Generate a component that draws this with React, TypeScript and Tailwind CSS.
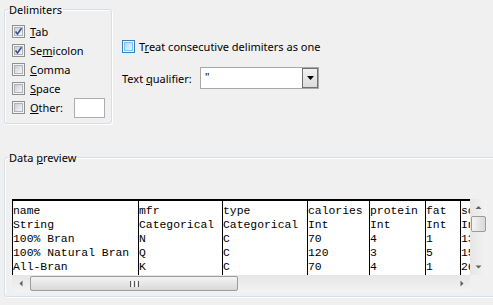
import React from "react";

const ui = { fontFamily: '"Noto Sans", Lato, sans-serif' };
const mono = { fontFamily: '"Liberation Mono", "Courier New", monospace' };

function Check({ checked, hot }: { checked?: boolean; hot?: boolean }) {
  if (hot) {
    return (
      <div className="w-[13px] h-[13px] border border-[#3c7fb1] bg-[#e9f6fd] p-[1px] shrink-0">
        <div className="w-full h-full border border-[#79c6f9] bg-gradient-to-br from-[#b1dffa] to-[#e1f4fe]" />
      </div>
    );
  }
  return (
    <div className="relative w-[13px] h-[13px] border border-[#8e8f8f] bg-[#f4f4f4] p-[1px] shrink-0">
      <div className="w-full h-full border border-[#aeb3b9] bg-gradient-to-br from-[#cbcfd5] to-[#f6f6f6]" />
      {checked && (
        <svg className="absolute left-[1px] top-[1px]" width="9" height="9" viewBox="0 0 9 9">
          <path d="M1.5 4.5 L3.5 7 L7.5 1.2" fill="none" stroke="#3a4f97" strokeWidth="1.6" />
        </svg>
      )}
    </div>
  );
}

function Row({ ul, pre = "", post, checked }: { ul: string; pre?: string; post: string; checked?: boolean }) {
  return (
    <div className="flex items-center h-[19px]">
      <Check checked={checked} />
      <span className="ml-[5px] text-[11px] leading-[15px] text-black whitespace-nowrap">
        {pre}
        <u>{ul}</u>
        {post}
      </span>
    </div>
  );
}

const cols: { w: number; cells: string[] }[] = [
  { w: 126, cells: ["name", "String", "100% Bran", "100% Natural Bran", "All-Bran"] },
  { w: 84, cells: ["mfr", "Categorical", "N", "Q", "K"] },
  { w: 85, cells: ["type", "Categorical", "C", "C", "C"] },
  { w: 62, cells: ["calories", "Int", "70", "120", "70"] },
  { w: 56, cells: ["protein", "Int", "4", "3", "4"] },
  { w: 35, cells: ["fat", "Int", "1", "5", "1"] },
  { w: 40, cells: ["sodium", "Int", "130", "15", "260"] },
];

function Tri({ dir }: { dir: "up" | "down" | "left" | "right" }) {
  const d =
    dir === "up"
      ? "M0.5 4 L3.5 1 L6.5 4 Z"
      : dir === "down"
      ? "M0.5 1.5 L3.5 4.5 L6.5 1.5 Z"
      : dir === "left"
      ? "M4.5 0.5 L1.5 3.5 L4.5 6.5 Z"
      : "M1.5 0.5 L4.5 3.5 L1.5 6.5 Z";
  const horiz = dir === "up" || dir === "down";
  return (
    <svg width={horiz ? 7 : 6} height={horiz ? 6 : 7} viewBox={horiz ? "0 0 7 6" : "0 0 6 7"}>
      <path d={d} fill="#606060" />
    </svg>
  );
}

export default function App() {
  return (
    <div className="w-[493px] h-[305px] bg-[#f0f0f0] overflow-hidden text-black" style={ui}>
      <div className="flex items-start">
        <fieldset className="ml-[4px] mt-[2px] w-[108px] h-[122px] border border-[#d5dfe5] rounded-[3px] shadow-[inset_1px_1px_0_#fff,1px_1px_0_#fff]">
          <legend className="ml-[3px] px-[1px] text-[11px] leading-[15px]">Delimiters</legend>
          <div className="pl-[7px] pt-[5px]">
            <Row pre="" ul="T" post="ab" checked />
            <Row pre="Se" ul="m" post="icolon" checked />
            <Row pre="" ul="C" post="omma" />
            <Row pre="" ul="S" post="pace" />
            <div className="flex items-center h-[19px]">
              <Check />
              <span className="ml-[5px] w-[44px] text-[11px] leading-[15px] whitespace-nowrap">
                <u>O</u>ther:
              </span>
              <div className="w-[31px] h-[20px] mt-[1px] border border-[#abadb3] bg-white" />
            </div>
          </div>
        </fieldset>
        <div className="ml-[10px] mt-[38px] flex flex-col">
          <div className="flex items-center h-[17px]">
            <Check hot />
            <span className="ml-[4px] text-[11px] leading-[15px] whitespace-nowrap">
              T<u>r</u>eat consecutive delimiters as one
            </span>
          </div>
          <div className="flex items-center h-[22px] mt-[12px]">
            <span className="w-[78px] text-[11px] leading-[15px] whitespace-nowrap">
              Text <u>q</u>ualifier:
            </span>
            <div className="flex w-[119px] h-[22px] border border-[#a8a8a8] bg-white">
              <span className="flex-1 pl-[4px] text-[11px] leading-[18px]">"</span>
              <div className="w-[16px] h-full border border-[#707070] bg-gradient-to-b from-[#f2f2f2] to-[#dcdcdc] flex items-center justify-center">
                <svg width="7" height="4" viewBox="0 0 7 4">
                  <path d="M0 0 L7 0 L3.5 4 Z" fill="#000" />
                </svg>
              </div>
            </div>
          </div>
        </div>
      </div>

      <fieldset className="ml-[4px] mt-[26px] w-[520px] h-[147px] border border-[#d5dfe5] rounded-[3px] shadow-[inset_1px_1px_0_#fff,1px_1px_0_#fff]">
        <legend className="ml-[3px] px-[1px] text-[11px] leading-[15px]">
          Data <u>p</u>review
        </legend>
        <div className="pl-[7px] pt-[34px]">
          <div className="grid grid-cols-[458px_17px] grid-rows-[76px_17px]">
            <div className="flex bg-white border-t-2 border-black overflow-hidden" style={mono}>
              {cols.map((c, i) => (
                <div
                  key={i}
                  className="shrink-0 border-l border-black pt-[3px] overflow-hidden"
                  style={{ width: c.w }}
                >
                  {c.cells.map((t, j) => (
                    <div key={j} className="h-[14px] text-[11.4px] leading-[14px] whitespace-pre">
                      {t}
                    </div>
                  ))}
                </div>
              ))}
            </div>
            <div className="flex flex-col bg-gradient-to-r from-[#e6e6e6] to-[#f3f3f3]">
              <div className="h-[17px] flex items-center justify-center">
                <Tri dir="up" />
              </div>
              <div className="mx-[1px] h-[16px] rounded-[2px] border border-[#9b9b9b] bg-gradient-to-r from-[#f4f4f4] to-[#dadada]" />
              <div className="flex-1" />
              <div className="h-[17px] flex items-center justify-center">
                <Tri dir="down" />
              </div>
            </div>
            <div className="flex items-center bg-gradient-to-b from-[#e6e6e6] to-[#f3f3f3]">
              <div className="w-[17px] h-full flex items-center justify-center">
                <Tri dir="left" />
              </div>
              <div className="w-[208px] h-[15px] ml-[1px] rounded-[2px] border border-[#9b9b9b] bg-gradient-to-b from-[#f4f4f4] to-[#d8d8d8] flex items-center justify-center">
                <div className="flex gap-[1px]">
                  <div className="w-[1px] h-[6px] bg-[#555]" />
                  <div className="w-[1px] h-[6px] bg-[#fff]" />
                  <div className="w-[1px] h-[6px] bg-[#555]" />
                  <div className="w-[1px] h-[6px] bg-[#fff]" />
                  <div className="w-[1px] h-[6px] bg-[#555]" />
                </div>
              </div>
              <div className="flex-1" />
              <div className="w-[17px] h-full flex items-center justify-center">
                <Tri dir="right" />
              </div>
            </div>
            <div className="bg-[#f0f0f0]" />
          </div>
        </div>
      </fieldset>
    </div>
  );
}
